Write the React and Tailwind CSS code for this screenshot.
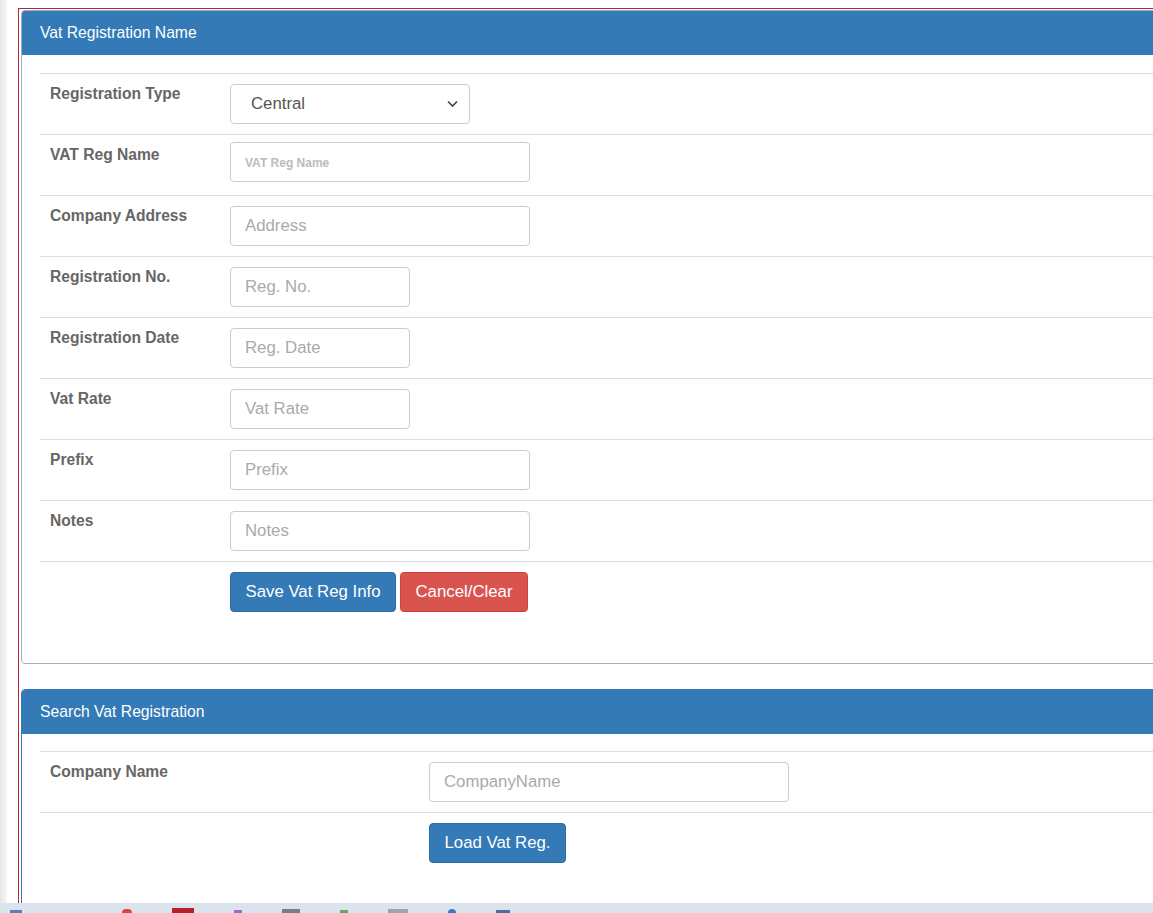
import { useState } from 'react';

const inputCls = "block h-[40px] rounded-[4px] border border-[#ccc] px-[14px] text-[16.8px] text-[#555] placeholder:text-[#aaa] outline-none bg-white";
const btnCls = "h-[40px] rounded-[4px] border text-[16.8px] text-white";

function Row({ label, labelWidth = "w-[190px]", top = "pt-[10px]", children }) {
    return (
        <div className="flex h-[61px] border-t border-[#ddd]">
            <div className={"shrink-0 pl-[10px] pt-[9px] text-[15.6px] font-bold text-[#666] leading-[22px] " + labelWidth}>{label}</div>
            <div className={top}>{children}</div>
        </div>
    );
}

function Panel({ title, children, border = "border-[#337ab7]", className = "" }) {
    return (
        <div className={"w-[1200px] rounded-[4px] border bg-white overflow-hidden " + border + " " + className}>
            <div className="h-[44px] bg-[#337ab7] pl-[18px] pt-[12px] text-[15.7px] leading-[20px] text-white">{title}</div>
            {children}
        </div>
    );
}

export default function App() {
    const [regType, setRegType] = useState('Central');

    return (
        <div className="h-[913px] w-[1153px] overflow-hidden bg-white flex flex-col" style={{ fontFamily: '"Liberation Sans", Arial, sans-serif' }}>
            <div className="flex flex-1 min-h-0">
                <div className="w-[7px] shrink-0 bg-gradient-to-r from-[#e6e6e6] to-[#f7f7f7]" />
                <div className="flex-1 pl-[11px] pt-[8px] min-w-0">
                    <div className="h-full border-l border-t border-[#b0283a] pl-[2px] pt-[1px]">
                        <Panel title="Vat Registration Name" border="border-[#9fb1c4]">
                            <div className="px-[18px] pt-[18px] pb-[41px]">
                                <Row label="Registration Type">
                                    <div className="relative w-[240px]">
                                        <select
                                            value={regType}
                                            onChange={e => setRegType(e.target.value)}
                                            className={inputCls + " w-[240px] appearance-none pl-[20px] text-[16.5px] text-[#333]"}
                                        >
                                            <option>Central</option>
                                            <option>Local</option>
                                        </select>
                                        <svg className="pointer-events-none absolute right-[12px] top-[16px]" width="11" height="8" viewBox="0 0 11 8" fill="none">
                                            <path d="M1 1.5l4.5 4.5L10 1.5" stroke="#444" strokeWidth="1.6" />
                                        </svg>
                                    </div>
                                </Row>
                                <Row label="VAT Reg Name" top="pt-[7px]">
                                    <input placeholder="VAT Reg Name" className={inputCls + " w-[300px] placeholder:text-[12px] placeholder:font-bold placeholder:text-[#bbb]"} />
                                </Row>
                                <Row label="Company Address">
                                    <input placeholder="Address" className={inputCls + " w-[300px]"} />
                                </Row>
                                <Row label="Registration No.">
                                    <input placeholder="Reg. No." className={inputCls + " w-[180px]"} />
                                </Row>
                                <Row label="Registration Date">
                                    <input placeholder="Reg. Date" className={inputCls + " w-[180px]"} />
                                </Row>
                                <Row label="Vat Rate">
                                    <input placeholder="Vat Rate" className={inputCls + " w-[180px]"} />
                                </Row>
                                <Row label="Prefix">
                                    <input placeholder="Prefix" className={inputCls + " w-[300px]"} />
                                </Row>
                                <Row label="Notes">
                                    <input placeholder="Notes" className={inputCls + " w-[300px]"} />
                                </Row>
                                <Row label="">
                                    <div className="flex gap-[4px]">
                                        <button className={btnCls + " w-[166px] border-[#2e6da4] bg-[#337ab7]"}>Save Vat Reg Info</button>
                                        <button className={btnCls + " w-[128px] border-[#d43f3a] bg-[#d9534f]"}>Cancel/Clear</button>
                                    </div>
                                </Row>
                            </div>
                        </Panel>

                        <Panel title="Search Vat Registration" className="mt-[25px] h-[240px]">
                            <div className="px-[18px] pt-[17px]">
                                <Row label="Company Name" labelWidth="w-[389px]">
                                    <input placeholder="CompanyName" className={inputCls + " w-[360px]"} />
                                </Row>
                                <Row label="" labelWidth="w-[389px]">
                                    <button className={btnCls + " w-[137px] border-[#2e6da4] bg-[#337ab7]"}>Load Vat Reg.</button>
                                </Row>
                            </div>
                        </Panel>
                    </div>
                </div>
            </div>
            <div className="h-[10px] shrink-0 bg-[#dbe4ec] flex items-end gap-[40px] pl-[10px] overflow-hidden">
                <div className="h-[3px] w-[12px] bg-[#5b7fb6]" />
                <div className="ml-[60px] h-[4px] w-[10px] rounded-t bg-[#d9453b]" />
                <div className="h-[5px] w-[22px] bg-[#b3212c]" />
                <div className="h-[3px] w-[8px] bg-[#9a6ad0]" />
                <div className="h-[4px] w-[18px] bg-[#7a7f86]" />
                <div className="h-[3px] w-[8px] bg-[#6aa86a]" />
                <div className="h-[4px] w-[20px] bg-[#a0a4aa]" />
                <div className="h-[4px] w-[8px] rounded-t bg-[#3c78c8]" />
                <div className="h-[3px] w-[14px] bg-[#4a6fa5]" />
            </div>
        </div>
    );
}
